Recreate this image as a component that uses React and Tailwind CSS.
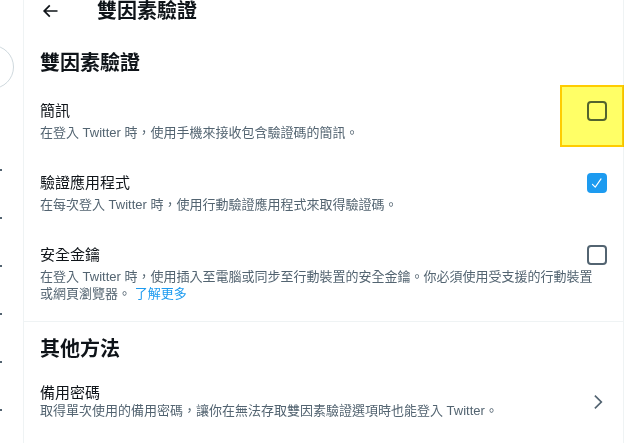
import React from 'react';

const font = { fontFamily: '"Liberation Sans", "Noto Sans CJK TC", sans-serif' };

function BackArrow() {
  return (
    <svg viewBox="0 0 24 24" className="w-5 h-5 fill-[#0f1419]">
      <path d="M7.414 13l5.043 5.04-1.414 1.42L3.586 12l7.457-7.46 1.414 1.42L7.414 11H21v2H7.414z" />
    </svg>
  );
}

function Chevron() {
  return (
    <svg viewBox="0 0 24 24" className="w-5 h-5 fill-[#536471]">
      <path d="M14.586 12L7.543 4.96l1.414-1.42L17.414 12l-8.457 8.46-1.414-1.42L14.586 12z" />
    </svg>
  );
}

function Checkbox({ checked }) {
  if (checked) {
    return (
      <div className="w-5 h-5 rounded-[4px] bg-[#1d9bf0] flex items-center justify-center shrink-0">
        <svg viewBox="0 0 24 24" className="w-[14px] h-[14px] fill-white">
          <path d="M9 20c-.264 0-.52-.104-.707-.293l-4.785-4.785c-.39-.39-.39-1.023 0-1.414s1.023-.39 1.414 0l3.946 3.945L18.075 4.41c.32-.45.94-.558 1.395-.24.45.318.56.942.24 1.394L9.817 19.577c-.17.24-.438.395-.732.42-.028.002-.057.003-.085.003z" />
        </svg>
      </div>
    );
  }
  return <div className="w-5 h-5 rounded-[4px] border-2 border-[#536471] shrink-0" />;
}

function Option({ title, checked, children }) {
  return (
    <div>
      <div className="flex items-center justify-between h-5">
        <span className="text-[15px] leading-5 text-[#0f1419]">{title}</span>
        <Checkbox checked={checked} />
      </div>
      <p className="mt-[3px] w-[560px] text-[13px] leading-[17px] text-[#536471]">{children}</p>
    </div>
  );
}

export default function App() {
  return (
    <div className="relative flex w-[631px] h-[443px] overflow-hidden bg-white" style={font}>
      {/* cut-off nav column */}
      <div className="relative w-[23px] shrink-0">
        <div className="absolute left-[-30px] top-[45px] w-11 h-11 rounded-full border border-[#cfd9de]" />
        <div className="mt-[169px] flex flex-col gap-[46px]">
          {[0, 1, 2, 3, 4, 5].map((i) => (
            <div key={i} className="w-[2px] h-[2px] bg-[#536471]" />
          ))}
        </div>
      </div>

      <main className="w-[601px] shrink-0 border-x border-[#eff3f4]">
        <div className="-mt-px h-6 flex items-center pl-4">
          <BackArrow />
          <h1 className="ml-[37px] text-[20px] leading-6 font-bold text-[#0f1419]">雙因素驗證</h1>
        </div>

        <div className="px-4">
          <h2 className="mt-[28px] text-[20px] leading-6 font-bold text-[#0f1419]">雙因素驗證</h2>

          <div className="mt-[26px]">
            <Option title="簡訊">在登入 Twitter 時，使用手機來接收包含驗證碼的簡訊。</Option>
          </div>
          <div className="mt-[32px]">
            <Option title="驗證應用程式" checked>
              在每次登入 Twitter 時，使用行動驗證應用程式來取得驗證碼。
            </Option>
          </div>
          <div className="mt-[32px]">
            <Option title="安全金鑰">
              在登入 Twitter 時，使用插入至電腦或同步至行動裝置的安全金鑰。你必須使用受支援的行動裝置或網頁瀏覽器。 <span className="text-[#1d9bf0]">了解更多</span>
            </Option>
          </div>
        </div>

        <div className="mt-[19px] border-t border-[#eff3f4]" />

        <div className="px-4">
          <h2 className="mt-[15px] text-[20px] leading-6 font-bold text-[#0f1419]">其他方法</h2>
          <div className="mt-[23px] flex items-center justify-between">
            <div>
              <div className="text-[15px] leading-[18px] text-[#0f1419]">備用密碼</div>
              <div className="text-[13px] leading-[17px] text-[#536471]">
                取得單次使用的備用密碼，讓你在無法存取雙因素驗證選項時也能登入 Twitter。
              </div>
            </div>
            <div className="-mr-[1px]">
              <Chevron />
            </div>
          </div>
        </div>
      </main>

      {/* highlight overlay */}
      <div className="absolute left-[560px] top-[85px] w-[64px] h-[62px] bg-[#ffff66] border-2 border-[#ffcc00] mix-blend-multiply" />
    </div>
  );
}
